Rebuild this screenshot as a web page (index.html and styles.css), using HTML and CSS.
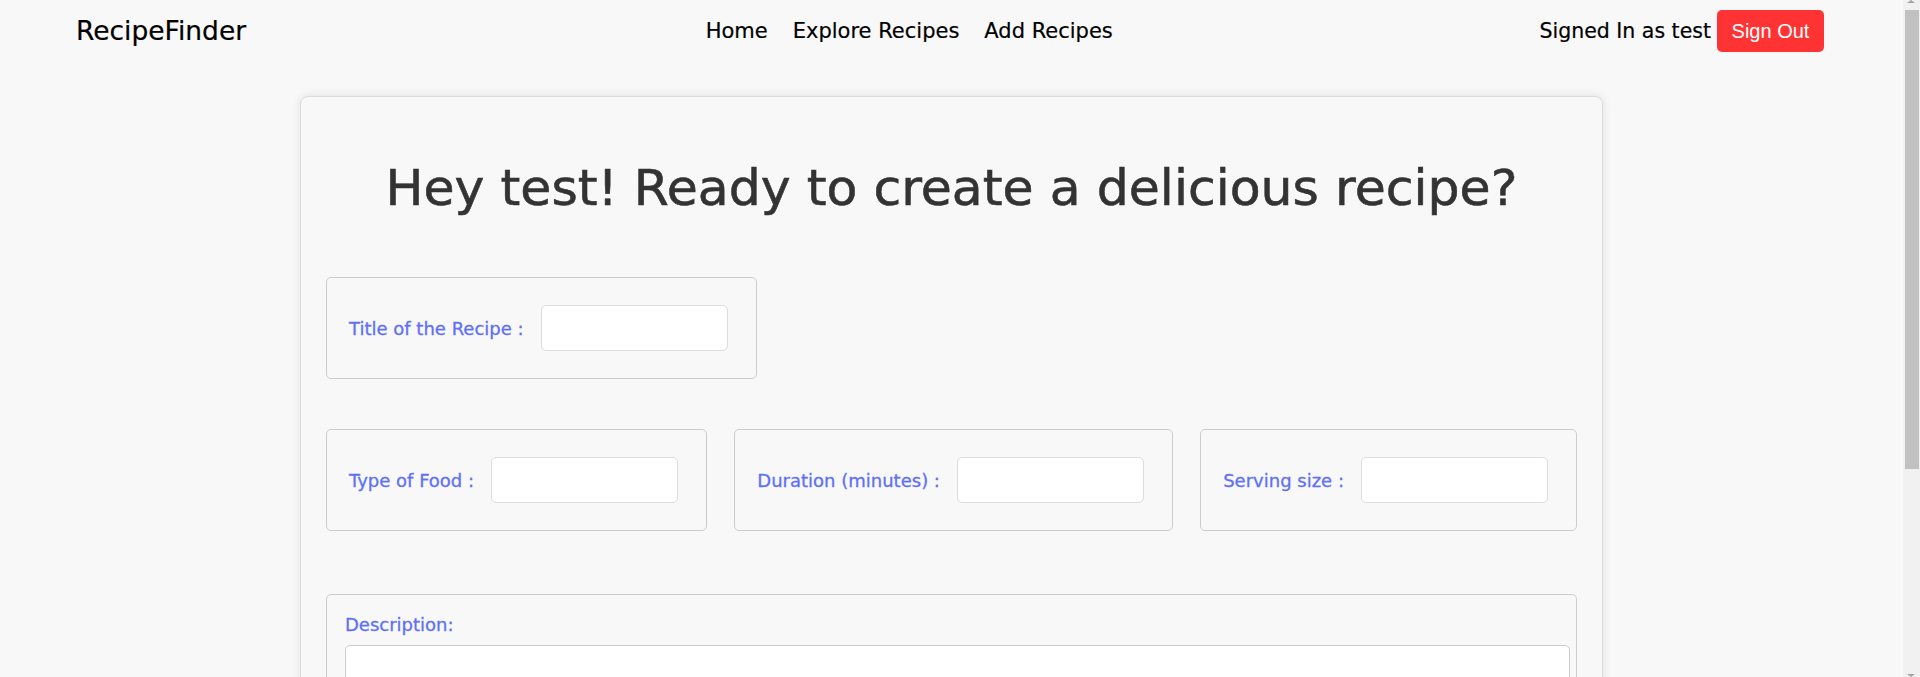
FILE: index.html
```html
<!DOCTYPE html>
<html lang="en">
<head>
<meta charset="utf-8">
<title>RecipeFinder - Add Recipe</title>
<link rel="stylesheet" href="styles.css">
</head>
<body>
<nav class="navbar">
  <a class="brand" href="#">RecipeFinder</a>
  <ul class="nav-links">
    <li><a href="#">Home</a></li>
    <li><a href="#">Explore Recipes</a></li>
    <li><a href="#">Add Recipes</a></li>
  </ul>
  <div class="nav-user">
    <span class="signed">Signed In as test</span>
    <button class="signout" type="button">Sign Out</button>
  </div>
</nav>

<main class="card">
  <h1 class="headline">Hey test! Ready to create a delicious recipe?</h1>
  <form class="recipe-form">
    <div class="row row-title">
      <div class="field">
        <label class="field-label" for="title">Title of the Recipe :</label>
        <input class="field-input" id="title" type="text">
      </div>
    </div>
    <div class="row row-meta">
      <div class="field">
        <label class="field-label" for="type">Type of Food :</label>
        <input class="field-input" id="type" type="text">
      </div>
      <div class="field">
        <label class="field-label" for="duration">Duration (minutes) :</label>
        <input class="field-input" id="duration" type="text">
      </div>
      <div class="field">
        <label class="field-label" for="serving">Serving size :</label>
        <input class="field-input" id="serving" type="text">
      </div>
    </div>
    <div class="block">
      <label class="field-label block-label" for="desc">Description:</label>
      <textarea class="block-text" id="desc"></textarea>
    </div>
    <div class="block">
      <label class="field-label block-label" for="ingr">Ingredients:</label>
      <textarea class="block-text" id="ingr"></textarea>
    </div>
    <div class="actions">
      <button class="submit" type="button">Add Recipe</button>
    </div>
  </form>
</main>

<div class="scrollbar" aria-hidden="true">
  <span class="sb-arrow sb-up"></span>
  <span class="sb-thumb"></span>
  <span class="sb-arrow sb-down"></span>
</div>
</body>
</html>
```
FILE: styles.css
```css
html, body {
  margin: 0;
  padding: 0;
}

body {
  background: #f8f8f8;
  font-family: "DejaVu Sans", "Open Sans", sans-serif;
  color: #000;
  margin-right: 17px;
}

.navbar {
  display: flex;
  align-items: center;
  justify-content: space-between;
  height: 61px;
  padding: 0 79px 0 76px;
}

.brand {
  font-size: 26.5px;
  color: #000;
  text-decoration: none;
  -webkit-text-stroke: 0.2px #000;
}

.nav-links {
  display: flex;
  gap: 25px;
  list-style: none;
  margin: 0 0 0 33px;
  padding: 0;
}

.nav-links a {
  font-size: 21px;
  color: #000;
  text-decoration: none;
  -webkit-text-stroke: 0.2px #000;
}

.nav-user {
  display: flex;
  align-items: center;
  gap: 6px;
}

.signed {
  font-size: 20.5px;
  -webkit-text-stroke: 0.2px #000;
}

.signout {
  font-family: "Liberation Sans", Arial, sans-serif;
  font-size: 20px;
  line-height: 24px;
  color: #fff;
  background: #ff3333;
  border: none;
  border-radius: 5px;
  padding: 9px 14px;
  width: 107px;
}

.card {
  box-sizing: border-box;
  width: 1303px;
  margin: 35px auto 40px;
  padding: 25px;
  background: #f8f8f8;
  border: 1px solid #dcdcdc;
  border-radius: 8px;
  box-shadow: 0 0 10px rgba(0, 0, 0, 0.1);
}

.headline {
  font-size: 50.5px;
  font-weight: normal;
  line-height: 60px;
  text-align: center;
  color: #333;
  margin: 36px 0 59px;
  -webkit-text-stroke: 0.6px #333;
}

.row {
  display: flex;
}

.row-meta {
  margin-top: 50px;
  justify-content: space-between;
}

.field {
  display: flex;
  align-items: center;
  gap: 17px;
  border: 1px solid #cccccc;
  border-radius: 5px;
  padding: 27px 28px 27px 22px;
}

.field-label {
  font-size: 18px;
  color: #5f70f5;
  -webkit-text-stroke: 0.3px #5f70f5;
}

.field-input {
  box-sizing: border-box;
  width: 187px;
  height: 46px;
  background: #fff;
  border: 1px solid #dddddd;
  border-radius: 5px;
}

.block {
  margin-top: 63px;
  border: 1px solid #cccccc;
  border-radius: 5px;
  padding: 19px 20px 20px 18px;
}

.block + .block {
  margin-top: 40px;
}

.block-label {
  display: block;
  line-height: 21px;
  margin-bottom: 10px;
}

.block-text {
  display: block;
  width: 100%;
  height: 160px;
  padding: 6px;
  background: #fff;
  border: 1px solid #cccccc;
  border-radius: 5px;
  resize: vertical;
}

.actions {
  display: flex;
  justify-content: center;
  margin-top: 30px;
}

.submit {
  font-family: "Liberation Sans", Arial, sans-serif;
  font-size: 20px;
  color: #fff;
  background: #ff3333;
  border: none;
  border-radius: 5px;
  padding: 10px 24px;
}

/* simulated browser scrollbar (window chrome overlay) */
.scrollbar {
  position: fixed;
  top: 0;
  right: 0;
  width: 17px;
  height: 100vh;
  background: #f1f1f1;
}

.sb-thumb {
  position: absolute;
  top: 10px;
  left: 2px;
  right: 1px;
  height: 459px;
  background: #c1c1c1;
}

.sb-arrow {
  position: absolute;
  left: 4px;
  width: 0;
  height: 0;
  border-left: 4.5px solid transparent;
  border-right: 4.5px solid transparent;
}

.sb-up {
  top: 0;
  border-bottom: 3px solid #a3a3a3;
}

.sb-down {
  bottom: 0;
  border-top: 3px solid #a3a3a3;
}
```
